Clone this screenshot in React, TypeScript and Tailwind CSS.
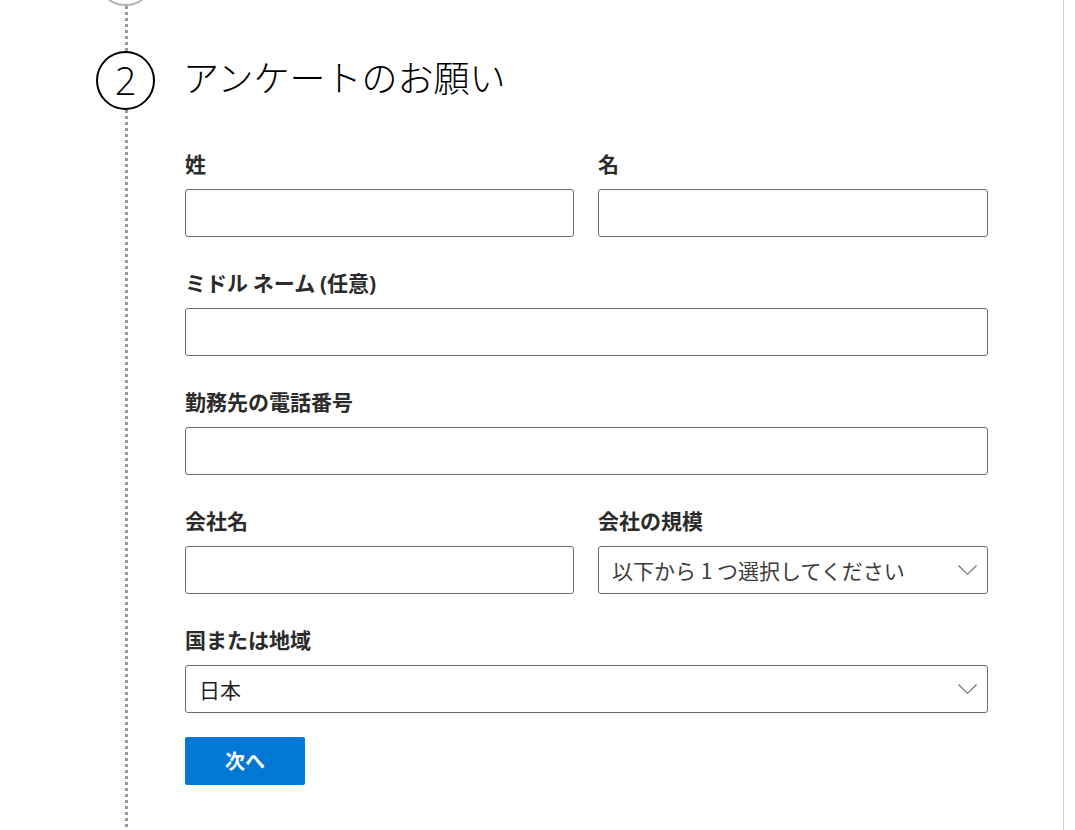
import React from "react";

const font = { fontFamily: '"Noto Sans CJK JP", "Noto Sans", sans-serif' };

function Label({ children }: { children: React.ReactNode }) {
  return (
    <div className="h-[28px] text-[21px] leading-[25px] font-bold text-[#2b2b2b] mb-[10px] whitespace-nowrap">
      {children}
    </div>
  );
}

function TextInput() {
  return <div className="h-[48px] border border-[#6b6b6b] rounded-[3px] bg-white" />;
}

function Chevron() {
  return (
    <svg width="19" height="10" viewBox="0 0 19 10" className="shrink-0">
      <path d="M0.5 0.5 L9.5 9.3 L18.5 0.5" fill="none" stroke="#6b6b6b" strokeWidth="1.1" />
    </svg>
  );
}

function SelectBox({ text, color }: { text: string; color: string }) {
  return (
    <div className="h-[48px] border border-[#6b6b6b] rounded-[3px] bg-white flex items-center pl-[13px] pr-[10px]">
      <span className={`flex-1 text-[21px] leading-[28px] whitespace-nowrap ${color}`}>{text}</span>
      <Chevron />
    </div>
  );
}

const dotted =
  "w-[3px] ml-[29px] shrink-0 bg-[repeating-linear-gradient(to_bottom,#999999_0px,#999999_3px,transparent_3px,transparent_6px)]";

export default function App() {
  return (
    <div className="w-[1075px] h-[830px] bg-white overflow-hidden" style={font}>
      <div className="w-[1064px] h-[830px] border-r border-[#d2d2d2] flex">
        {/* timeline */}
        <div className="w-[59px] ml-[96px] shrink-0 flex flex-col items-start">
          <div className="w-[59px] h-[59px] shrink-0 rounded-full border-2 border-[#b3b3b3] -mt-[53px]" />
          <div className={`h-[45px] ${dotted}`} />
          <div className="w-[59px] h-[59px] shrink-0 rounded-full border-2 border-black flex items-center justify-center">
            <span
              className="text-[38px] leading-none font-light text-black -mt-[2px]"
              style={{ fontFamily: '"Open Sans", "Noto Sans", sans-serif' }}
            >
              2
            </span>
          </div>
          <div className={`flex-1 ${dotted}`} />
        </div>

        {/* content */}
        <div className="ml-[30px] w-[803px] shrink-0">
          <h1 className="mt-[52px] h-[48px] text-[36px] leading-[48px] font-light text-black whitespace-nowrap -ml-[2px]">
            アンケートのお願い
          </h1>

          <div className="mt-[51px] flex flex-col gap-[33px]">
            <div className="grid grid-cols-[389px_1fr] gap-[24px]">
              <div>
                <Label>姓</Label>
                <TextInput />
              </div>
              <div>
                <Label>名</Label>
                <TextInput />
              </div>
            </div>

            <div>
              <Label>
                ミドル ネーム <span style={{ fontFamily: '"Open Sans", sans-serif' }}>(</span>任意
                <span style={{ fontFamily: '"Open Sans", sans-serif' }}>)</span>
              </Label>
              <TextInput />
            </div>

            <div>
              <Label>勤務先の電話番号</Label>
              <TextInput />
            </div>

            <div className="grid grid-cols-[389px_1fr] gap-[24px]">
              <div>
                <Label>会社名</Label>
                <TextInput />
              </div>
              <div>
                <Label>会社の規模</Label>
                <SelectBox text="以下から 1 つ選択してください" color="text-[#3b3b3b]" />
              </div>
            </div>

            <div>
              <Label>国または地域</Label>
              <SelectBox text="日本" color="text-[#1f1f1f]" />
            </div>
          </div>

          <button className="mt-[24px] w-[120px] h-[48px] rounded-[2px] bg-[#0078d4] text-white text-[20px] font-bold leading-[28px]">
            次へ
          </button>
        </div>
      </div>
    </div>
  );
}
